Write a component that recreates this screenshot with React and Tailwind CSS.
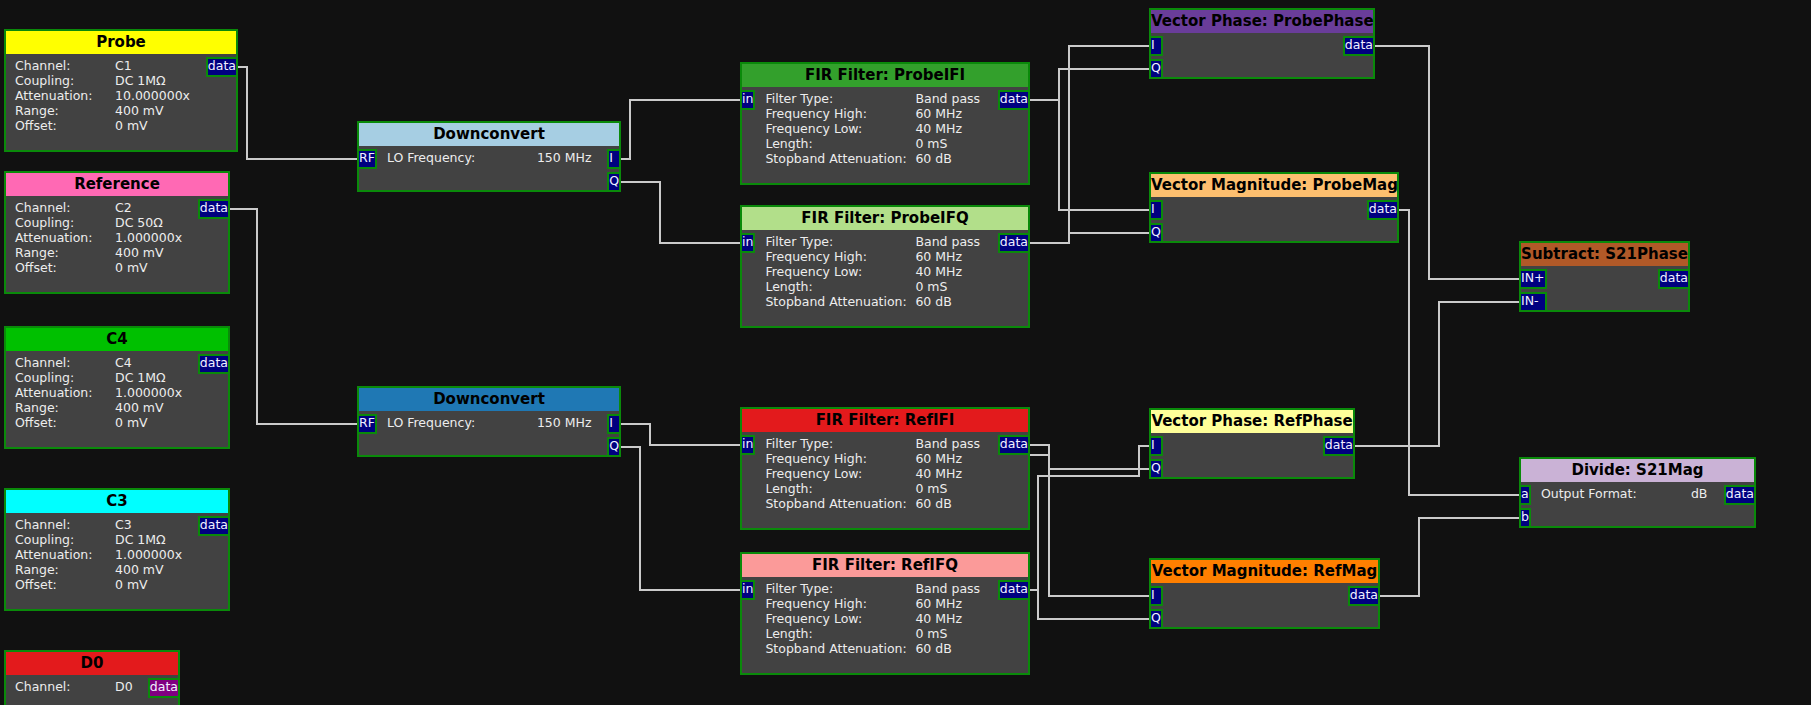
const chan = (ch, coupling, atten) => [
  ["Channel:", ch],
  ["Coupling:", coupling],
  ["Attenuation:", atten],
  ["Range:", "400 mV"],
  ["Offset:", "0 mV"],
];

const fir = [
  ["Filter Type:", "Band pass"],
  ["Frequency High:", "60 MHz"],
  ["Frequency Low:", "40 MHz"],
  ["Length:", "0 mS"],
  ["Stopband Attenuation:", "60 dB"],
];

const nodes = [
  { pos: "left-[4px] top-[29px] w-[234px] h-[123px]", head: "bg-[#ffff00]", title: "Probe", params: chan("C1", "DC 1MΩ", "10.000000x"), outputs: ["data"] },
  { pos: "left-[4px] top-[171px] w-[226px] h-[123px]", head: "bg-[#ff69b4]", title: "Reference", params: chan("C2", "DC 50Ω", "1.000000x"), outputs: ["data"] },
  { pos: "left-[4px] top-[326px] w-[226px] h-[123px]", head: "bg-[#00c000]", title: "C4", params: chan("C4", "DC 1MΩ", "1.000000x"), outputs: ["data"] },
  { pos: "left-[4px] top-[488px] w-[226px] h-[123px]", head: "bg-[#00ffff]", title: "C3", params: chan("C3", "DC 1MΩ", "1.000000x"), outputs: ["data"] },
  { pos: "left-[4px] top-[650px] w-[176px] h-[80px]", head: "bg-[#e31a1c]", title: "D0", params: [["Channel:", "D0"]], outputs: ["data"], digital: true },
  { pos: "left-[357px] top-[121px] w-[264px] h-[71px]", head: "bg-[#a6cee3]", title: "Downconvert", inputs: ["RF"], params: [["LO Frequency:", "150 MHz"]], wide: true, outputs: ["I", "Q"] },
  { pos: "left-[357px] top-[386px] w-[264px] h-[71px]", head: "bg-[#1f78b4]", title: "Downconvert", inputs: ["RF"], params: [["LO Frequency:", "150 MHz"]], wide: true, outputs: ["I", "Q"] },
  { pos: "left-[740px] top-[62px] w-[290px] h-[123px]", head: "bg-[#33a02c]", title: "FIR Filter: ProbeIFI", inputs: ["in"], params: fir, wide: true, outputs: ["data"] },
  { pos: "left-[740px] top-[205px] w-[290px] h-[123px]", head: "bg-[#b2df8a]", title: "FIR Filter: ProbeIFQ", inputs: ["in"], params: fir, wide: true, outputs: ["data"] },
  { pos: "left-[740px] top-[407px] w-[290px] h-[123px]", head: "bg-[#e31a1c]", title: "FIR Filter: RefIFI", inputs: ["in"], params: fir, wide: true, outputs: ["data"] },
  { pos: "left-[740px] top-[552px] w-[290px] h-[123px]", head: "bg-[#fb9a99]", title: "FIR Filter: RefIFQ", inputs: ["in"], params: fir, wide: true, outputs: ["data"] },
  { pos: "left-[1149px] top-[8px] w-[226px] h-[71px]", head: "bg-[#6a3d9a]", title: "Vector Phase: ProbePhase", inputs: ["I", "Q"], outputs: ["data"] },
  { pos: "left-[1149px] top-[172px] w-[250px] h-[71px]", head: "bg-[#fdbf6f]", title: "Vector Magnitude: ProbeMag", inputs: ["I", "Q"], outputs: ["data"] },
  { pos: "left-[1149px] top-[408px] w-[206px] h-[71px]", head: "bg-[#ffff99]", title: "Vector Phase: RefPhase", inputs: ["I", "Q"], outputs: ["data"] },
  { pos: "left-[1149px] top-[558px] w-[231px] h-[71px]", head: "bg-[#ff7f00]", title: "Vector Magnitude: RefMag", inputs: ["I", "Q"], outputs: ["data"] },
  { pos: "left-[1519px] top-[241px] w-[171px] h-[71px]", head: "bg-[#b15928]", title: "Subtract: S21Phase", inputs: ["IN+", "IN-"], outputs: ["data"] },
  { pos: "left-[1519px] top-[457px] w-[237px] h-[71px]", head: "bg-[#cab2d6]", title: "Divide: S21Mag", inputs: ["a", "b"], params: [["Output Format:", "dB"]], wide: true, outputs: ["data"] },
];

// orthogonal links, output pin -> input pin
const wires = [
  [[238, 67], [247, 67], [247, 159], [357, 159]],
  [[230, 209], [257, 209], [257, 424], [357, 424]],
  [[621, 159], [630, 159], [630, 100], [740, 100]],
  [[621, 182], [660, 182], [660, 243], [740, 243]],
  [[621, 424], [650, 424], [650, 445], [740, 445]],
  [[621, 447], [640, 447], [640, 590], [740, 590]],
  [[1030, 100], [1059, 100], [1059, 69], [1149, 69]],
  [[1030, 100], [1059, 100], [1059, 210], [1149, 210]],
  [[1030, 243], [1069, 243], [1069, 46], [1149, 46]],
  [[1030, 243], [1069, 243], [1069, 233], [1149, 233]],
  [[1030, 445], [1049, 445], [1049, 596], [1149, 596]],
  [[1030, 455], [1049, 455], [1049, 469], [1149, 469]],
  [[1030, 590], [1038, 590], [1038, 476], [1139, 476], [1139, 446], [1149, 446]],
  [[1030, 590], [1038, 590], [1038, 619], [1149, 619]],
  [[1375, 46], [1429, 46], [1429, 279], [1519, 279]],
  [[1399, 210], [1409, 210], [1409, 495], [1519, 495]],
  [[1355, 446], [1439, 446], [1439, 302], [1519, 302]],
  [[1380, 596], [1419, 596], [1419, 518], [1519, 518]],
];

const Port = ({ label, digital }) => (
  <div
    className={`h-[20px] border-2 border-[#0a8a0a] text-[#f0f0ff] leading-[14px] whitespace-nowrap ${
      digital ? "bg-[#800080]" : "bg-[#000080]"
    }`}
  >
    {label}
  </div>
);

const Node = ({ node }) => {
  const { pos, head, title, inputs = [], outputs = [], params = [], wide, digital } = node;
  return (
    <div className={`absolute border-2 border-[#0a8a0a] bg-[#424242] ${pos}`}>
      <div className={`h-[23px] text-center text-[15px] font-bold leading-[23px] text-black whitespace-nowrap ${head}`}>
        {title}
      </div>
      <div className="-mx-[2px] flex pt-[3px]">
        {inputs.length > 0 && (
          <div className="flex flex-col gap-[3px]">
            {inputs.map((p) => (
              <Port key={p} label={p} />
            ))}
          </div>
        )}
        <div className={`pt-px ${inputs.length ? "ml-[10px]" : "ml-[11px]"}`}>
          {params.map(([k, v]) => (
            <div key={k} className="flex leading-[15px] whitespace-nowrap text-[#ededed]">
              <span className={wide ? "w-[150px]" : "w-[100px]"}>{k}</span>
              <span>{v}</span>
            </div>
          ))}
        </div>
        <div className="flex-1" />
        <div className="flex flex-col gap-[3px]">
          {outputs.map((p) => (
            <Port key={p} label={p} digital={digital} />
          ))}
        </div>
      </div>
    </div>
  );
};

export default function App() {
  return (
    <div className="relative h-[705px] w-[1811px] overflow-hidden bg-[#111111] font-['DejaVu_Sans',sans-serif] text-[12.5px]">
      <svg className="absolute inset-0" width="1811" height="705">
        {wires.map((w, i) => (
          <polyline
            key={i}
            points={w.map((p) => p.join(",")).join(" ")}
            fill="none"
            stroke="#cbcbcb"
            strokeWidth="2"
          />
        ))}
      </svg>
      {nodes.map((n, i) => (
        <Node key={i} node={n} />
      ))}
    </div>
  );
}
